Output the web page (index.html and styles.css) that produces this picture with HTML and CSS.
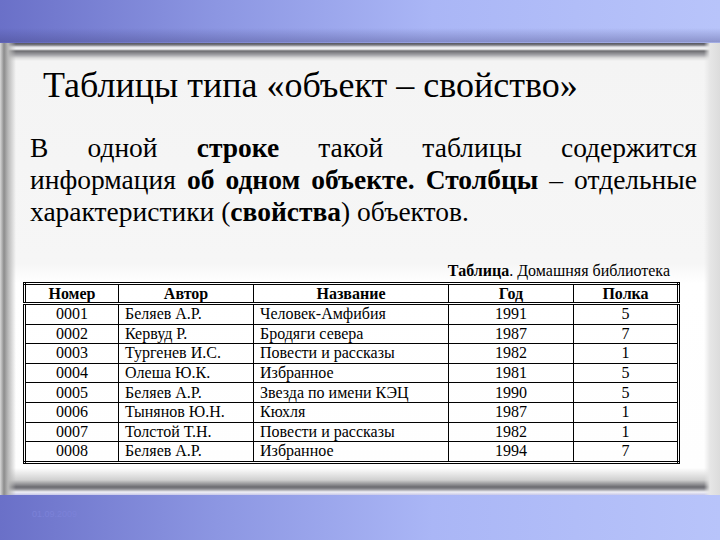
FILE: index.html
```html
<!DOCTYPE html>
<html>
<head>
<meta charset="utf-8">
<link rel="stylesheet" href="styles.css">
</head>
<body>
<div class="slide">
  <div class="panel">
    <div class="panel-inner">
      <h1 class="title">Таблицы типа «объект – свойство»</h1>
      <p class="text"><span class="line">В одной <b>строке</b> такой таблицы содержится</span><span class="line">информация <b>об одном объекте. Столбцы</b> – отдельные</span><span class="last">характеристики (<b>свойства</b>) объектов.</span></p>
      <div class="table-wrap">
        <div class="caption"><b>Таблица</b>. Домашняя библиотека</div>
        <table class="lib">
          <colgroup>
            <col class="c1"><col class="c2"><col class="c3"><col class="c4"><col class="c5">
          </colgroup>
          <thead>
            <tr><th>Номер</th><th>Автор</th><th>Название</th><th>Год</th><th>Полка</th></tr>
          </thead>
          <tbody>
            <tr><td class="ctr">0001</td><td>Беляев А.Р.</td><td>Человек-Амфибия</td><td class="ctr">1991</td><td class="ctr">5</td></tr>
            <tr><td class="ctr">0002</td><td>Кервуд Р.</td><td>Бродяги севера</td><td class="ctr">1987</td><td class="ctr">7</td></tr>
            <tr><td class="ctr">0003</td><td>Тургенев И.С.</td><td>Повести и рассказы</td><td class="ctr">1982</td><td class="ctr">1</td></tr>
            <tr><td class="ctr">0004</td><td>Олеша Ю.К.</td><td>Избранное</td><td class="ctr">1981</td><td class="ctr">5</td></tr>
            <tr><td class="ctr">0005</td><td>Беляев А.Р.</td><td>Звезда по имени КЭЦ</td><td class="ctr">1990</td><td class="ctr">5</td></tr>
            <tr><td class="ctr">0006</td><td>Тынянов Ю.Н.</td><td>Кюхля</td><td class="ctr">1987</td><td class="ctr">1</td></tr>
            <tr><td class="ctr">0007</td><td>Толстой Т.Н.</td><td>Повести и рассказы</td><td class="ctr">1982</td><td class="ctr">1</td></tr>
            <tr><td class="ctr">0008</td><td>Беляев А.Р.</td><td>Избранное</td><td class="ctr">1994</td><td class="ctr">7</td></tr>
          </tbody>
        </table>
      </div>
    </div>
  </div>
  <div class="footer">01.09.2009</div>
</div>
</body>
</html>
```
FILE: styles.css
```css
html, body {
  margin: 0;
  padding: 0;
}
body {
  width: 720px;
  height: 540px;
  overflow: hidden;
  font-family: "Liberation Serif", serif;
  color: #000;
}
.slide {
  width: 720px;
  height: 540px;
  padding-top: 43px;
  box-sizing: border-box;
  background:
    linear-gradient(to bottom, rgba(60,60,120,0) 0, rgba(60,60,120,0) 28px, rgba(60,60,120,0.35) 42px, rgba(60,60,120,0) 43px),
    linear-gradient(to right, #6a70c8 0%, #8c96e2 30%, #aab6f6 60%, #b8c4fa 100%);
}
.panel {
  height: 452px;
  background:
    linear-gradient(to right, #d8d8d8 0, #8c8c8c 4px, #b8b8b8 8px, rgba(245,245,245,0) 16px),
    linear-gradient(to left, #dcdcdc 0, #e6e6e6 10px, rgba(245,245,245,0) 16px),
    linear-gradient(to bottom,
      #55555e 0, #7a7a80 2px, #e4e4e8 4px, #f4f4f4 6px,
      #6c6c70 8px, #a4a4a8 12px, #dcdcdc 15px, #f4f4f4 18px,
      #f6f6f6 220px, #ffffff 240px, #fefefe 425px,
      #d0d0d0 437px, #6a6a70 444px, #8a8a90 446px, #f0f0f6 449px, #c8c8e8 452px);
}
.panel-inner {
  padding: 0 23px 0 30px;
  display: flex;
  flex-direction: column;
}
.title {
  margin: 22px 0 0 13px;
  font-weight: normal;
  font-size: 36px;
  line-height: 40px;
  white-space: nowrap;
}
.text {
  margin: 27px 0 0 0;
  font-size: 27.5px;
  line-height: 32px;
  width: 667px;
}
.text .line {
  display: block;
  text-align: justify;
  text-align-last: justify;
  white-space: nowrap;
}
.text .last {
  display: block;
  white-space: nowrap;
}
.table-wrap {
  margin: 34px 0 0 -7px;
  width: 655px;
  display: flex;
  flex-direction: column;
}
.caption {
  align-self: flex-end;
  margin: 0 8px 2px 0;
  font-size: 16px;
  line-height: 18px;
}
.lib {
  border-collapse: collapse;
  border: 3px double #000;
  table-layout: fixed;
  width: 654px;
  font-size: 16px;
}
.c1 { width: 94px; }
.c2 { width: 135px; }
.c3 { width: 195px; }
.c4 { width: 125px; }
.c5 { width: 105px; }
.lib th, .lib td {
  border: 1px solid #000;
  padding: 0 6px;
  white-space: nowrap;
  overflow: hidden;
}
.lib th {
  font-weight: bold;
  text-align: center;
  border-bottom: 3px double #000;
  height: 17px;
  line-height: 17px;
}
.lib td {
  text-align: left;
  height: 18.6px;
  line-height: 18px;
}
.lib td.ctr {
  text-align: center;
}
.footer {
  margin: 14px 0 0 32px;
  font-family: "Liberation Sans", Arial, sans-serif;
  font-size: 9px;
  color: #7c82d8;
}
```
